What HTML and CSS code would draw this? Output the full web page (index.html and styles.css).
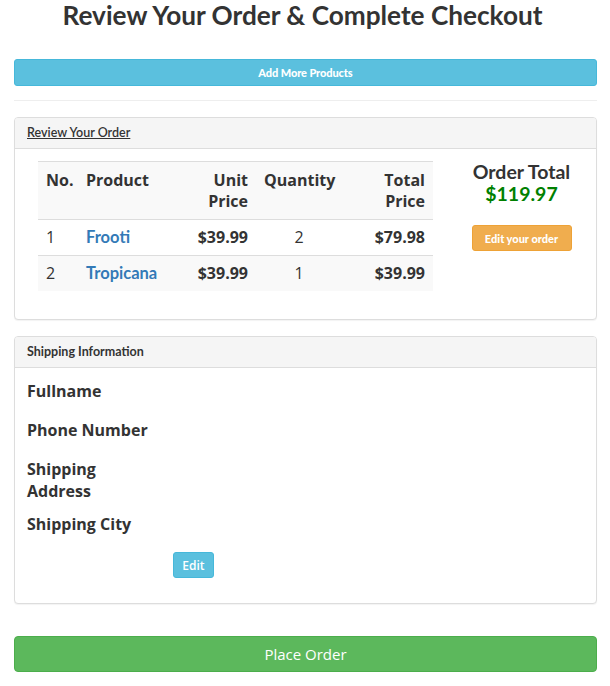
FILE: index.html
```html
<!DOCTYPE html>
<html>
<head>
<meta charset="utf-8">
<link rel="stylesheet" href="styles.css">
</head>
<body>
<div class="page">
  <h1 class="title">Review Your Order &amp; Complete Checkout</h1>
  <button class="btn btn-info btn-block btn-add">Add More Products</button>
  <hr class="divider">

  <div class="panel panel-review">
    <div class="panel-heading"><a class="heading-link" href="#">Review Your Order</a></div>
    <div class="panel-body review-body">
      <table class="order-table">
        <colgroup>
          <col class="c-no"><col class="c-prod"><col class="c-unit"><col class="c-qty"><col class="c-total">
        </colgroup>
        <thead>
          <tr>
            <th>No.</th>
            <th>Product</th>
            <th class="right">Unit Price</th>
            <th>Quantity</th>
            <th class="right">Total Price</th>
          </tr>
        </thead>
        <tbody>
          <tr>
            <td>1</td>
            <td><a class="product" href="#">Frooti</a></td>
            <td class="right strong">$39.99</td>
            <td class="center">2</td>
            <td class="right strong">$79.98</td>
          </tr>
          <tr class="striped">
            <td>2</td>
            <td><a class="product" href="#">Tropicana</a></td>
            <td class="right strong">$39.99</td>
            <td class="center">1</td>
            <td class="right strong">$39.99</td>
          </tr>
        </tbody>
      </table>
      <div class="total-col">
        <div class="total-label">Order Total</div>
        <div class="total-value">$119.97</div>
        <button class="btn btn-warning btn-edit-order">Edit your order</button>
      </div>
    </div>
  </div>

  <div class="panel panel-shipping">
    <div class="panel-heading heading-plain">Shipping Information</div>
    <div class="panel-body shipping-body">
      <div class="info-row"><div class="info-label">Fullname</div><div class="info-value"></div></div>
      <div class="info-row"><div class="info-label">Phone Number</div><div class="info-value"></div></div>
      <div class="info-row"><div class="info-label">Shipping Address</div><div class="info-value"></div></div>
      <div class="info-row"><div class="info-label">Shipping City</div><div class="info-value"></div></div>
      <div class="edit-row"><button class="btn btn-info btn-edit">Edit</button></div>
    </div>
  </div>

  <button class="btn btn-success btn-block btn-place">Place Order</button>
</div>
</body>
</html>
```

FILE: styles.css
```css
* { box-sizing: border-box; }
html, body { margin: 0; padding: 0; background: #fff; }
body {
  font-family: "Open Sans", "Liberation Sans", sans-serif;
  color: #333;
  font-size: 14px;
}
.page {
  padding: 0 16px 0 11px;
}
.panel, .btn-block, .divider { margin-left: 3px; margin-right: -3px; }
.title {
  font-family: Lato, "Liberation Sans", sans-serif;
  font-weight: 700;
  font-size: 26.2px;
  line-height: 31px;
  text-align: center;
  margin: 0;
  height: 59px;
  color: #333;
}
.btn {
  display: inline-block;
  border: 1px solid transparent;
  border-radius: 3px;
  color: #fff;
  cursor: pointer;
  padding: 0;
}
.btn-block { display: block; width: 100%; }
.btn-info { background: #5bc0de; border-color: #46b8da; }
.btn-warning { background: #f0ad4e; border-color: #eea236; }
.btn-success { background: #5cb85c; border-color: #4cae4c; }
.btn-add {
  height: 27px;
  font-family: Lato, "Liberation Sans", sans-serif;
  font-weight: 900;
  font-size: 11px;
  letter-spacing: -0.1px;
}
.divider {
  border: 0;
  border-top: 1px solid #eee;
  margin-top: 14px;
  margin-bottom: 16px;
}
.panel {
  border: 1px solid #ddd;
  border-radius: 4px;
  background: #fff;
  box-shadow: 0 1px 1px rgba(0,0,0,.05);
}
.panel-heading {
  background: #f5f5f5;
  border-bottom: 1px solid #ddd;
  border-radius: 3px 3px 0 0;
  height: 31px;
  padding: 7px 12px 0;
  font-family: Lato, "Liberation Sans", sans-serif;
  font-size: 12.5px;
  line-height: 16px;
  font-weight: 600;
}
.heading-link { color: #333; text-decoration: underline; }
.heading-plain { font-weight: 700; }
.review-body {
  display: grid;
  grid-template-columns: 395px 1fr;
  column-gap: 14px;
  padding: 12px 0 28px 23px;
}
.order-table {
  width: 395px;
  border-collapse: collapse;
  table-layout: fixed;
  font-size: 16px;
  line-height: 20px;
}
.c-no { width: 40px; }
.c-prod { width: 88px; }
.c-unit { width: 90px; }
.c-qty { width: 86px; }
.c-total { width: 91px; }
.order-table th {
  background: #f9f9f9;
  border-top: 1px solid #ddd;
  border-bottom: 1px solid #ddd;
  text-align: left;
  vertical-align: top;
  padding: 8px 8px 7px 8px;
  font-weight: 700;
  line-height: 21px;
}
.order-table td {
  border-top: 1px solid #ddd;
  padding: 7px 8px 8px;
  vertical-align: top;
}
.order-table tbody tr:first-child td { border-top: 0; }
.order-table tr.striped td { background: #f9f9f9; }
.right { text-align: right !important; }
.center { text-align: center; }
.strong { font-weight: 700; }
.product {
  color: #337ab7;
  text-decoration: none;
  font-family: Lato, "Liberation Sans", sans-serif;
  font-weight: 700;
  font-size: 16.5px;
}
.total-col {
  display: flex;
  flex-direction: column;
  align-items: center;
}
.total-label {
  font-family: Lato, "Liberation Sans", sans-serif;
  font-weight: 700;
  font-size: 19.5px;
  line-height: 22px;
}
.total-value {
  font-family: Lato, "Liberation Sans", sans-serif;
  font-weight: 700;
  font-size: 19.5px;
  line-height: 22px;
  color: #008000;
}
.btn-edit-order {
  margin-top: 20px;
  height: 26px;
  width: 100px;
  font-family: Lato, "Liberation Sans", sans-serif;
  font-weight: 900;
  font-size: 11px;
}
.panel-review { margin-bottom: 16px; }
.shipping-body {
  padding: 12px 12px 25px;
}
.info-row {
  display: flex;
  min-height: 28px;
  margin-bottom: 11px;
}
.info-label {
  width: 128px;
  font-weight: 700;
  font-size: 16px;
  line-height: 22px;
}
.edit-row {
  padding-left: 146px;
}
.btn-edit {
  width: 41px;
  height: 26px;
  font-size: 12px;
  font-weight: 600;
  font-family: "Open Sans", "Liberation Sans", sans-serif;
}
.btn-place {
  margin-top: 32px;
  height: 36px;
  font-size: 15px;
  font-family: "Open Sans", "Liberation Sans", sans-serif;
  border-radius: 4px;
}
```
